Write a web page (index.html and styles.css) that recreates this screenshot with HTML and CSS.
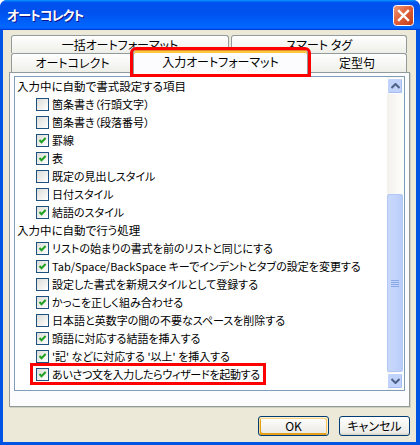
FILE: index.html
```html
<!DOCTYPE html>
<html>
<head>
    <meta charset="utf-8">
    <title>オートコレクト</title>
    <link rel="stylesheet" href="styles.css">
</head>
<body>

    <div class="window">
        <div class="titlebar">
            <span class="title">オートコレクト</span>
            <span class="close">
                <svg width="21" height="21" viewBox="0 0 21 21">
                    <defs>
                        <linearGradient id="cg" x1="0" y1="0" x2="1" y2="1">
                            <stop offset="0" stop-color="#f19b7c"/>
                            <stop offset="0.45" stop-color="#e0623c"/>
                            <stop offset="1" stop-color="#c13a16"/>
                        </linearGradient>
                    </defs>
                    <rect x="0.5" y="0.5" width="20" height="20" rx="3" fill="url(#cg)" stroke="#fff"/>
                    <path d="M6 6 L15 15 M15 6 L6 15" stroke="#fff" stroke-width="2.4" stroke-linecap="square"/>
                </svg>
            </span>
        </div>

        <div class="client">
            <div class="tabrow back">
                <div class="tab wide">一括オートフォーマット</div>
                <div class="tab smart">スマート タグ</div>
            </div>
            <div class="tabrow front">
                <div class="tab first">オートコレクト</div>
                <div class="tab active">入力オートフォーマット</div>
                <div class="tab last">定型句</div>
            </div>

            <div class="panel">
                <div class="listbox">
                    <div class="items">
                        <div class="group">入力中に自動で書式設定する項目</div>
                        <div class="item"><span class="box"></span>箇条書き（行頭文字）</div>
                        <div class="item"><span class="box"></span>箇条書き（段落番号）</div>
                        <div class="item"><span class="box on"></span>罫線</div>
                        <div class="item"><span class="box on"></span>表</div>
                        <div class="item"><span class="box"></span>既定の見出しスタイル</div>
                        <div class="item"><span class="box"></span>日付スタイル</div>
                        <div class="item"><span class="box on"></span>結語のスタイル</div>
                        <div class="group">入力中に自動で行う処理</div>
                        <div class="item"><span class="box on"></span>リストの始まりの書式を前のリストと同じにする</div>
                        <div class="item"><span class="box on"></span>Tab/Space/BackSpace キーでインデントとタブの設定を変更する</div>
                        <div class="item"><span class="box"></span>設定した書式を新規スタイルとして登録する</div>
                        <div class="item"><span class="box on"></span>かっこを正しく組み合わせる</div>
                        <div class="item"><span class="box"></span>日本語と英数字の間の不要なスペースを削除する</div>
                        <div class="item"><span class="box on"></span>頭語に対応する結語を挿入する</div>
                        <div class="item"><span class="box on"></span>'記' などに対応する '以上' を挿入する</div>
                        <div class="item"><span class="mark"><span class="box on"></span>あいさつ文を入力したらウィザードを起動する</span></div>
                    </div>
                    <div class="scrollbar">
                        <div class="sbtn">
                            <svg width="9" height="6" viewBox="0 0 9 6"><path d="M0.5 5 L4.5 1 L8.5 5" fill="none" stroke="#4d6185" stroke-width="2"/></svg>
                        </div>
                        <div class="track">
                            <div class="thumb">
                                <svg width="8" height="8" viewBox="0 0 8 8"><path d="M0 1.5H8M0 3.5H8M0 5.5H8M0 7.5H8" stroke="#8aa8e8" stroke-width="1"/></svg>
                            </div>
                        </div>
                        <div class="sbtn">
                            <svg width="9" height="6" viewBox="0 0 9 6"><path d="M0.5 1 L4.5 5 L8.5 1" fill="none" stroke="#4d6185" stroke-width="2"/></svg>
                        </div>
                    </div>
                </div>
            </div>

            <div class="buttons">
                <button class="btn default">OK</button>
                <button class="btn">キャンセル</button>
            </div>
        </div>
    </div>

</body>
</html>
```

FILE: styles.css
```css
        * {
            box-sizing: border-box;
        }

        body {
            margin: 0;
            width: 420px;
            height: 445px;
            overflow: hidden;
            font-family: "Noto Sans CJK JP", sans-serif;
            font-size: 12px;
            font-feature-settings: "palt";
            color: #000;
        }

        .window {
            width: 420px;
            height: 445px;
            background: #0054e3;
            border-radius: 7px 7px 0 0;
            display: flex;
            flex-direction: column;
            padding: 0 4px 3px 3px;
        }

        .titlebar {
            height: 30px;
            margin: 0 -4px 0 -3px;
            border-radius: 7px 7px 0 0;
            background: linear-gradient(180deg, #0997ff, #0053ee 8%, #0050ee 40%, #06f 88%, #06f 93%, #005bff 95%, #003dd7 96%, #003dd7);
            display: flex;
            align-items: center;
            justify-content: space-between;
            padding: 0 6px 0 7px;
        }

        .title {
            color: #fff;
            font-weight: bold;
            font-size: 13px;
            letter-spacing: -1px;
            text-shadow: 1px 1px #0f1089;
            margin-top: -2px;
        }

        .close {
            display: flex;
            margin-top: 1px;
        }

        .client {
            flex: 1;
            background: #ece9d8;
            padding: 5px 6px 0 6px;
            display: flex;
            flex-direction: column;
        }

        .tabrow {
            display: flex;
            padding-left: 2px;
        }

        .tab {
            height: 19px;
            border: 1px solid #919b9c;
            border-bottom: none;
            border-radius: 3px 3px 0 0;
            background: linear-gradient(180deg, #fff, #fafaf9 26%, #f0f0ea 95%, #ecebe5);
            display: flex;
            align-items: center;
            justify-content: center;
            line-height: 1;
        }

        .back .tab {
            height: 18px;
        }

        .tab.wide {
            width: 218px;
            margin-right: 2px;
        }

        .tab.smart {
            width: 176px;
        }

        .tab.first {
            width: 123px;
        }

        .tab.active {
            width: 175px;
            height: 24px;
            margin: -3px -1px -2px -1px;
            background: #fcfcfe;
            border-top: 1px solid #e68b2c;
            box-shadow: inset 0 2px #ffc83c;
            position: relative;
            z-index: 1;
            outline: 3px solid #f00;
            padding-bottom: 2px;
        }

        .tab.last {
            width: 100px;
        }

        .panel {
            height: 335px;
            background: #fcfcfe;
            border: 1px solid #919b9c;
            box-shadow: 1px 1px #d0cebf;
            padding: 3px 4px 15px 4px;
            display: flex;
        }

        .listbox {
            flex: 1;
            border: 1px solid #7f9db9;
            background: #fff;
            display: flex;
        }

        .items {
            flex: 1;
            padding-left: 2px;
            font-size: 11px;
        }

        .group,
        .item {
            height: 18px;
            display: flex;
            align-items: center;
            white-space: nowrap;
        }

        .group {
            font-size: 11.5px;
        }

        .item {
            padding-left: 19px;
        }

        .box {
            width: 13px;
            height: 13px;
            border: 1px solid #1c5180;
            background: linear-gradient(135deg, #dcdcd7, #fff);
            margin-right: 3px;
            flex: none;
        }

        .box.on {
            background: url("data:image/svg+xml,%3Csvg xmlns='http://www.w3.org/2000/svg' width='11' height='11'%3E%3Cpath d='M2.5 5 L4.5 7.2 L8.6 3' fill='none' stroke='%2321a121' stroke-width='2'/%3E%3C/svg%3E") no-repeat, linear-gradient(135deg, #dcdcd7, #fff);
        }

        .mark {
            display: flex;
            align-items: center;
            height: 16px;
            margin-left: -3px;
            padding: 0 3px;
            letter-spacing: -0.3px;
            outline: 3px solid #f00;
        }

        .scrollbar {
            width: 17px;
            background: linear-gradient(90deg, #f3f1ec, #fefefb);
            display: flex;
            flex-direction: column;
            padding: 1px 1px 1px 0;
        }

        .sbtn {
            height: 16px;
            border: 1px solid #fff;
            border-radius: 2px;
            background: #c1d3fb;
            box-shadow: inset -1px -1px #a6bdf1;
            display: flex;
            align-items: center;
            justify-content: center;
        }

        .track {
            flex: 1;
            display: flex;
            flex-direction: column;
            justify-content: flex-end;
        }

        .thumb {
            height: 178px;
            margin-bottom: 1px;
            border: 1px solid #b4c8f6;
            border-radius: 2px;
            background: linear-gradient(90deg, #c9d8fc, #c1d3fb 60%, #b6cbf8);
            display: flex;
            align-items: center;
            justify-content: center;
        }

        .buttons {
            display: flex;
            justify-content: flex-end;
            gap: 10px;
            margin-top: 9px;
        }

        .btn {
            width: 71px;
            height: 20px;
            font: 12px "Noto Sans CJK JP", sans-serif;
            font-feature-settings: "palt";
            border: 1px solid #003c74;
            border-radius: 3px;
            background: linear-gradient(180deg, #fff, #ecebe6 86%, #d6d0c5);
            padding: 0;
            line-height: 1;
        }

        .btn.default {
            box-shadow: inset -1px 1px #fff0cf, inset 1px 2px #fdd889, inset -2px 2px #fbc761, inset 2px -2px #e5a01a;
        }
```
